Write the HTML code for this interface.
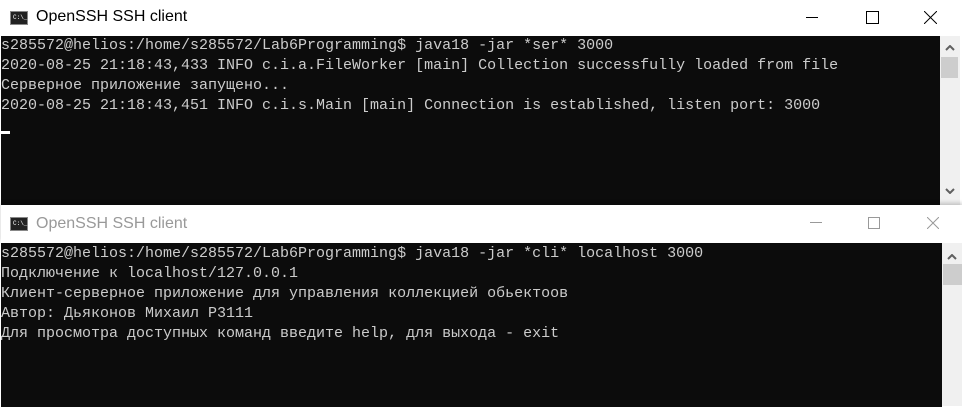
<!DOCTYPE html>
<html><head><style>
body{margin:0;width:962px;height:406px;overflow:hidden;background:#fff;position:relative;font-family:"Liberation Sans",sans-serif}
.t{position:absolute;left:0;width:962px;background:#fff}
.ttl{position:absolute;left:36px;font-size:16px}
.ic{position:absolute;left:10px;width:18px;height:14px;background:#222;border:1px solid #888;box-sizing:border-box}
.ic span{position:absolute;left:2px;top:2px;font:6px "Liberation Mono",monospace;color:#fff}
.con{position:absolute;background:#0c0c0c;font:15px/20px "Liberation Mono","DejaVu Sans Mono",monospace;color:#cccccc;white-space:pre;overflow:hidden}
.sb{position:absolute;background:#f0f0f0;width:20px}
.th{position:absolute;background:#cdcdcd;width:17px;left:1px;height:21px}
</style></head><body>
<div class="t" style="top:0;height:36px">
<div class="ic" style="top:11px"><span>C:\_</span></div>
<div class="ttl" style="top:8px;color:#000">OpenSSH SSH client</div>
<div style="position:absolute;left:806px;top:17px;width:12px;height:1px;background:#000"></div>
<div style="position:absolute;left:866px;top:11px;width:11px;height:11px;border:1px solid #000"></div>
<svg style="position:absolute;left:924px;top:11px" width="13" height="13"><path d="M0 0L13 13M13 0L0 13" stroke="#000" stroke-width="1"/></svg>
</div>
<div class="con" style="left:1px;top:36px;width:939px;height:169px">s285572@helios:/home/s285572/Lab6Programming$ java18 -jar *ser* 3000
2020-08-25 21:18:43,433 INFO c.i.a.FileWorker [main] Collection successfully loaded from file
Серверное приложение запущено...
2020-08-25 21:18:43,451 INFO c.i.s.Main [main] Connection is established, listen port: 3000<div style="position:absolute;left:0;top:95px;width:9px;height:3px;background:#fff"></div></div>
<div class="sb" style="left:940px;top:36px;height:169px">
<svg style="position:absolute;left:5px;top:9px" width="10" height="6"><path d="M1 5L5 1L9 5" stroke="#606060" stroke-width="2" fill="none"/></svg>
<div class="th" style="top:21px"></div>
<svg style="position:absolute;left:5px;top:152px" width="10" height="6"><path d="M1 1L5 5L9 1" stroke="#606060" stroke-width="2" fill="none"/></svg>
</div>
<div class="t" style="top:205px;height:38px;left:1px;box-shadow:0 -2px 4px rgba(0,0,0,.2)">
<div class="ic" style="top:12px;left:9px"><span>C:\_</span></div>
<div class="ttl" style="top:10px;left:35px;color:#999">OpenSSH SSH client</div>
<div style="position:absolute;left:809px;top:17px;width:12px;height:1px;background:#999"></div>
<div style="position:absolute;left:867px;top:12px;width:10px;height:10px;border:1px solid #999"></div>
<svg style="position:absolute;left:926px;top:12px" width="12" height="12"><path d="M0 0L12 12M12 0L0 12" stroke="#999" stroke-width="1"/></svg>
</div>
<div class="con" style="left:1px;top:243px;width:941px;height:163px;padding-top:1px">s285572@helios:/home/s285572/Lab6Programming$ java18 -jar *cli* localhost 3000
Подключение к localhost/127.0.0.1
Клиент-серверное приложение для управления коллекцией обьектоов
Автор: Дьяконов Михаил Р3111
Для просмотра доступных команд введите help, для выхода - exit</div>
<div class="sb" style="left:942px;top:243px;height:163px">
<svg style="position:absolute;left:5px;top:11px" width="10" height="6"><path d="M1 5L5 1L9 5" stroke="#606060" stroke-width="2" fill="none"/></svg>
<div class="th" style="top:21px;left:1px;width:19px"></div>
</div>
</body></html>
